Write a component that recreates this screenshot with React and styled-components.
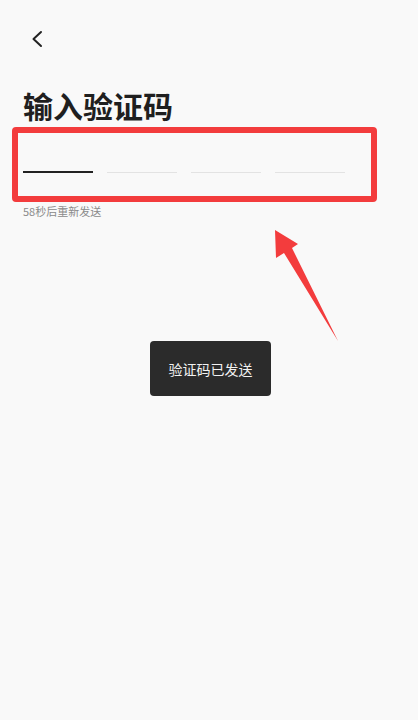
import React from 'react';
import styled, { createGlobalStyle } from 'styled-components';

const GlobalStyle = createGlobalStyle`
    html, body {
        margin: 0;
        padding: 0;
        background: #f9f9f9;
        font-family: "Noto Sans CJK SC", "Noto Sans", sans-serif;
    }
`;

const Page = styled.div`
    position: relative;
    width: 418px;
    height: 720px;
    overflow: hidden;
    background: #f9f9f9;
    padding: 0 23px;
    box-sizing: border-box;
`;

const BackButton = styled.button`
    display: block;
    margin: 28px 0 0 4px;
    padding: 0;
    width: 22px;
    height: 22px;
    border: none;
    background: transparent;
    color: #222;
`;

const Title = styled.h1`
    margin: 37px 0 0;
    font-size: 30px;
    line-height: 36px;
    font-weight: 700;
    color: #1f1f1f;
`;

const CodeRow = styled.div`
    display: flex;
    gap: 14px;
    margin-top: 48px;
`;

const CodeSlot = styled.div`
    width: 70px;
    height: ${(p) => (p.$active ? '2px' : '1px')};
    margin-top: ${(p) => (p.$active ? '0' : '1px')};
    background: ${(p) => (p.$active ? '#222' : '#e3e3e3')};
`;

const Hint = styled.p`
    margin: 31px 0 0;
    font-size: 11px;
    line-height: 14px;
    color: #8a8a8a;
`;

const HighlightBox = styled.div`
    position: absolute;
    left: 12px;
    top: 127px;
    width: 365px;
    height: 75px;
    box-sizing: border-box;
    border: 6px solid #f33c3d;
    border-radius: 4px;
    pointer-events: none;
`;

const Arrow = styled.svg`
    position: absolute;
    left: 270px;
    top: 226px;
`;

const Toast = styled.div`
    position: absolute;
    left: 150px;
    top: 341px;
    width: 121px;
    height: 55px;
    display: flex;
    align-items: center;
    justify-content: center;
    background: #2b2b2b;
    border-radius: 4px;
    color: #f2f2f2;
    font-size: 14px;
`;

export default function App() {
    return (
        <Page>
            <GlobalStyle />
            <BackButton aria-label="back">
                <svg width="22" height="22" viewBox="0 0 22 22">
                    <path d="M14 4 L6.5 11 L14 18" fill="none" stroke="currentColor" strokeWidth="2" strokeLinecap="round" strokeLinejoin="round" />
                </svg>
            </BackButton>
            <Title>输入验证码</Title>
            <CodeRow>
                <CodeSlot $active />
                <CodeSlot />
                <CodeSlot />
                <CodeSlot />
            </CodeRow>
            <Hint>58秒后重新发送</Hint>

            <HighlightBox />
            <Arrow width="75" height="120" viewBox="270 226 75 120">
                <polygon points="275,230 298,244 292,248 338,341 284,253 276,258" fill="#f33c3d" />
            </Arrow>
            <Toast>验证码已发送</Toast>
        </Page>
    );
}
